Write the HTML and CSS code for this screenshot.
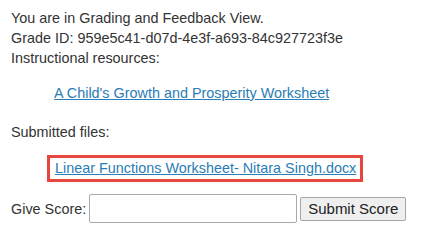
FILE: index.html
```html
<!DOCTYPE html>
<html>
<head>
<meta charset="utf-8">
<link rel="stylesheet" href="styles.css">
</head>
<body>
<div class="page">
  <div class="info">
    <div class="line">You are in Grading and Feedback View.</div>
    <div class="line">Grade ID: 959e5c41-d07d-4e3f-a693-84c927723f3e</div>
    <div class="line">Instructional resources:</div>
  </div>
  <div class="resource"><a class="link" href="#">A Child's Growth and Prosperity Worksheet</a></div>
  <div class="line label">Submitted files:</div>
  <div class="files"><span class="highlight"><a class="link" href="#">Linear Functions Worksheet- Nitara Singh.docx</a></span></div>
  <div class="score">
    <span class="score-label">Give Score:</span>
    <input class="score-input" type="text">
    <button class="submit">Submit Score</button>
  </div>
</div>
</body>
</html>
```
FILE: styles.css
```css
html, body {
  margin: 0;
  padding: 0;
  background: #ffffff;
}
.page {
  padding: 8px 11px;
  font-family: "Liberation Sans", Arial, sans-serif;
  font-size: 14.4px;
  color: #333333;
}
.line {
  line-height: 20px;
}
.resource {
  padding-left: 43px;
  margin-top: 15px;
  line-height: 20px;
}
.link {
  color: #2a7db5;
  text-decoration: underline;
}
.label {
  margin-top: 19px;
}
.files {
  margin-top: 13px;
  padding-left: 36px;
}
.highlight {
  display: inline-block;
  border: 3px solid #e8453c;
  padding: 2px 4px 2px 5px;
  line-height: 17px;
}
.score {
  display: flex;
  align-items: center;
  margin-top: 12px;
}
.score-label {
  margin-right: 3px;
}
.score-input {
  width: 204px;
  height: 25px;
  box-sizing: content-box;
  border: 1px solid #a9a9a9;
  border-radius: 2px;
  padding: 1px;
  margin: 0 3px 0 0;
}
.submit {
  font-family: "Liberation Sans", Arial, sans-serif;
  font-size: 15px;
  color: #222222;
  background: #efefef;
  border: 1px solid #a6a6a6;
  border-radius: 2px;
  height: 24px;
  padding: 0 7px;
  margin: 0;
}
```
